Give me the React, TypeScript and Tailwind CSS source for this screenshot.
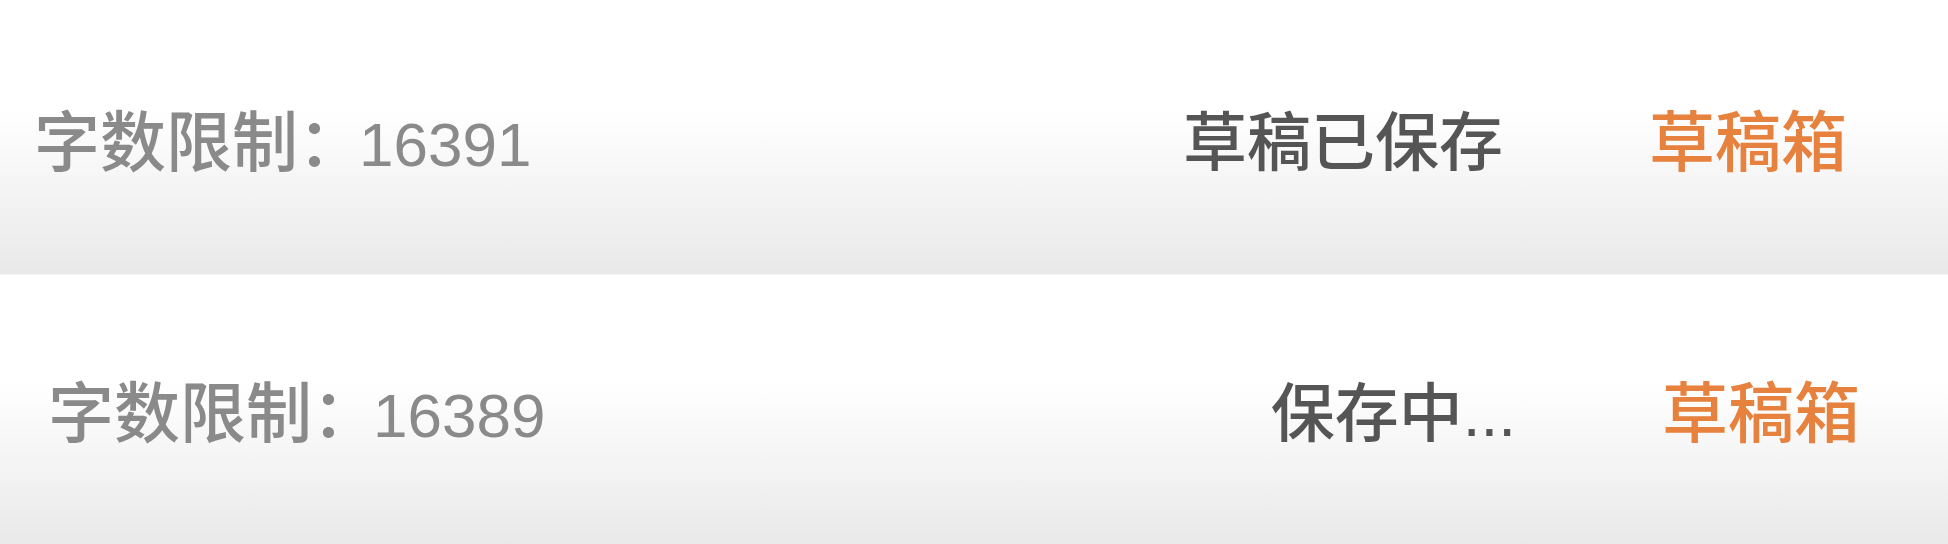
function StatusBar({
  count,
  status,
  className,
}: {
  count: number;
  status: string;
  className: string;
}) {
  return (
    <div
      className={`flex items-center bg-linear-to-b from-white from-40% to-[#e9e9e9] font-[family-name:'Liberation_Sans','Noto_Sans_CJK_SC',sans-serif] text-[66px] font-medium leading-none ${className}`}
    >
      <span className="text-[#8a8a8a]">
        字数限制：<span className="-ml-[5px] text-[62px] font-normal">{count}</span>
      </span>
      <span className="ml-auto text-[64px] text-[#555555]">{status}</span>
      <button className="ml-[146px] text-[#e6823e]">草稿箱</button>
    </div>
  );
}

export default function App() {
  return (
    <div className="flex h-[544px] w-[1948px] flex-col bg-white">
      <StatusBar count={16391} status="草稿已保存" className="h-[274px] pl-[34px] pr-[101px] pt-[12px]" />
      <div className="h-px bg-[#f4f4f4]" />
      <StatusBar count={16389} status="保存中..." className="h-[269px] pl-[48px] pr-[88px] pt-[8px]" />
    </div>
  );
}
